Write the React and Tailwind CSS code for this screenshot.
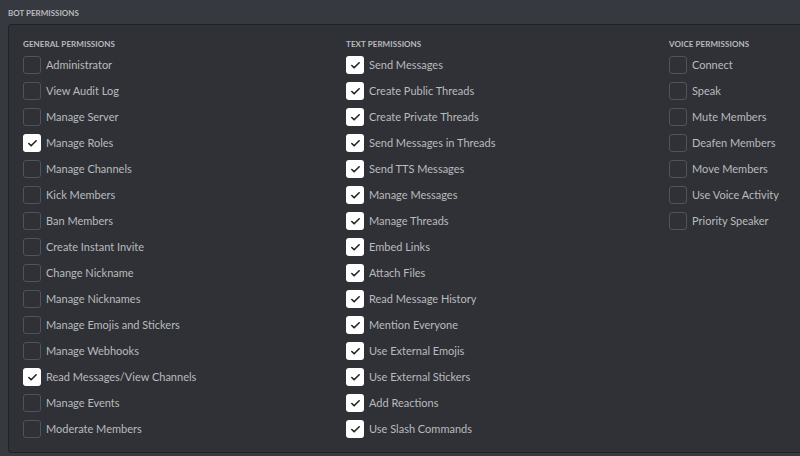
import { Check } from 'lucide-react'

const general = [
  ['Administrator', false],
  ['View Audit Log', false],
  ['Manage Server', false],
  ['Manage Roles', true],
  ['Manage Channels', false],
  ['Kick Members', false],
  ['Ban Members', false],
  ['Create Instant Invite', false],
  ['Change Nickname', false],
  ['Manage Nicknames', false],
  ['Manage Emojis and Stickers', false],
  ['Manage Webhooks', false],
  ['Read Messages/View Channels', true],
  ['Manage Events', false],
  ['Moderate Members', false],
]

const text = [
  'Send Messages',
  'Create Public Threads',
  'Create Private Threads',
  'Send Messages in Threads',
  'Send TTS Messages',
  'Manage Messages',
  'Manage Threads',
  'Embed Links',
  'Attach Files',
  'Read Message History',
  'Mention Everyone',
  'Use External Emojis',
  'Use External Stickers',
  'Add Reactions',
  'Use Slash Commands',
].map(t => [t, true])

const voice = [
  'Connect',
  'Speak',
  'Mute Members',
  'Deafen Members',
  'Move Members',
  'Use Voice Activity',
  'Priority Speaker',
].map(t => [t, false])

function Row({ label, checked }) {
  return (
    <label className="flex items-center h-[26px] gap-[5px] cursor-pointer">
      <span className={'w-[18px] h-[18px] flex-none rounded-[3px] flex items-center justify-center ' +
        (checked ? 'bg-white' : 'border border-[#4f545c]')}>
        {checked && <Check size={11} strokeWidth={3.5} className="text-[#202225]" />}
      </span>
      <span className="text-[11px] text-[#b9bbbe] whitespace-nowrap">{label}</span>
    </label>
  )
}

function Column({ title, items }) {
  return (
    <div className="w-[323px] flex-none">
      <div className="text-[8px] font-bold uppercase text-[#b9bbbe] tracking-[0.01em] h-[15px] leading-[14px]">{title}</div>
      <div className="flex flex-col">
        {items.map(([l, c]) => <Row key={l} label={l} checked={c} />)}
      </div>
    </div>
  )
}

export default function App() {
  return (
    <div className="w-[800px] h-[456px] overflow-hidden bg-[#36393f] pt-[6px] pl-[8px]" style={{ fontFamily: 'Lato, "Open Sans", sans-serif' }}>
      <div className="text-[8px] font-bold uppercase text-[#b9bbbe] h-[14px] leading-[14px]">Bot Permissions</div>
      <div className="mt-[4px] w-[900px] h-[429px] bg-[#2f3136] border border-[#202225] rounded-[3px] pl-[14px] pt-[12px] flex">
        <Column title="General Permissions" items={general} />
        <Column title="Text Permissions" items={text} />
        <Column title="Voice Permissions" items={voice} />
      </div>
    </div>
  )
}
